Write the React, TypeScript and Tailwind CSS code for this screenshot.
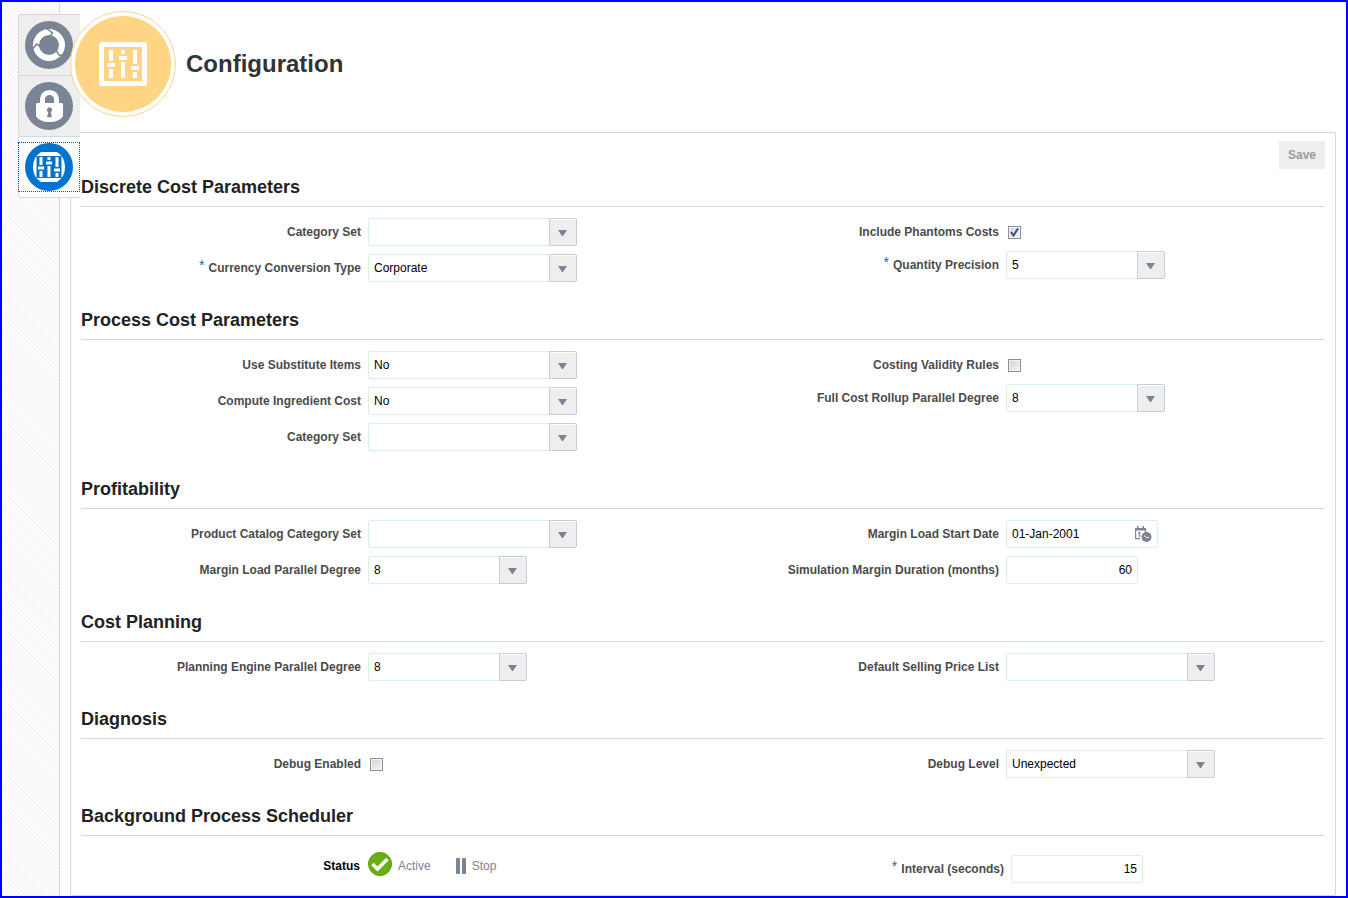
import React from 'react'

const widths = {
    small: 'w-[159px]',
    wide: 'w-[209px]',
}

const textBox =
    'h-7 rounded-[2px] border border-[#d6f5df] bg-white px-[5px] text-xs text-black outline-none'

function Field({ id, label, required, children }: {
    id: string
    label: string
    required?: boolean
    children: React.ReactNode
}) {
    return (
        <div className="flex items-start gap-[7px]">
            <label htmlFor={id} className="flex w-[280px] shrink-0 justify-end gap-1 pt-[5px] text-xs leading-[18px] font-bold text-[#4b4b4b]">
                {required && <span className="text-sm leading-3 font-normal text-[#0f6ab5]">*</span>}
                {label}
            </label>
            {children}
        </div>
    )
}

function SelectField({ id, label, value = '', size = 'wide', required }: {
    id: string
    label: string
    value?: string
    size?: 'small' | 'wide'
    required?: boolean
}) {
    return (
        <Field id={id} label={label} required={required}>
            <div className={`relative ${widths[size]}`}>
                <select id={id} defaultValue={value} className={`${textBox} block w-full appearance-none pr-8`}>
                    <option value={value}>{value}</option>
                </select>
                <span className="pointer-events-none absolute inset-y-0 right-0 flex w-7 items-center justify-center rounded-r-[2px] border border-[#c4ced7] bg-[#eeeeee] pt-[2px] pr-px shadow-[inset_0_1px_0_#ffffff]">
                    <svg width="9" height="6" viewBox="0 0 9 6" fill="#7b8494">
                        <path d="M0 0h9L5 6H4z" />
                    </svg>
                </span>
            </div>
        </Field>
    )
}

function CheckField({ id, label, checked }: { id: string; label: string; checked?: boolean }) {
    return (
        <div className="h-[25px]">
            <Field id={id} label={label}>
                <span className="relative mt-2 ml-[2px] block size-[13px]">
                    <input
                        id={id}
                        type="checkbox"
                        defaultChecked={checked}
                        className="peer block size-[13px] appearance-none border border-[#8e8f8f] bg-linear-to-br from-[#cfd3d8] to-[#f6f6f6] shadow-[inset_0_0_0_1px_#f4f4f4]"
                    />
                    <svg className="pointer-events-none absolute inset-0 hidden peer-checked:block" width="13" height="13" viewBox="0 0 13 13" fill="none" stroke="#3c4f8f" strokeWidth="2">
                        <path d="M3 6l2.5 3.5L10 2.5" />
                    </svg>
                </span>
            </Field>
        </div>
    )
}

function Section({ title, left, right }: { title: string; left: React.ReactNode; right: React.ReactNode }) {
    return (
        <section>
            <h2 className="border-b border-[#d6d7dd] pb-[5px] text-lg leading-7 font-bold text-[#222222]">{title}</h2>
            <div className="grid grid-cols-2 gap-x-8 pt-[11px]">
                <div className="flex flex-col gap-2">{left}</div>
                <div className="flex flex-col gap-2">{right}</div>
            </div>
        </section>
    )
}

function CycleIcon() {
    return (
        <svg width="48" height="48" viewBox="0 0 48 48">
            <circle cx="24" cy="24" r="24" fill="#7b8494" />
            <circle cx="24" cy="24" r="13" fill="none" stroke="#ffffff" strokeWidth="6" />
            <g fill="none" stroke="#7b8494" strokeWidth="1.5">
                <path d="M20.500 7l2.500 1.500 4.500 3.500-3.500 4.500" />
                <path d="M41 33l-6.500 1.500-4-5.500" />
                <path d="M7.500 28.500l4-5.500 5.500 3.500" />
            </g>
        </svg>
    )
}

function LockIcon() {
    return (
        <svg width="48" height="48" viewBox="0 0 48 48">
            <circle cx="24" cy="24" r="24" fill="#7b8494" />
            <path d="M17.500 22v-5a7 6.500 0 0 1 14 0v5" fill="none" stroke="#ffffff" strokeWidth="5" />
            <path d="M12 21h25l1 1v12c-2.500 4-7.500 6-13.500 6S13.500 38 11 34V22z" fill="#ffffff" />
            <path d="M24.500 25.300a2.600 2.600 0 0 1 1.200 4.900l1.300 5h-5l1.300-5a2.600 2.600 0 0 1 1.200-4.900z" fill="#7b8494" />
        </svg>
    )
}

function SlidersIcon() {
    return (
        <svg width="48" height="48" viewBox="0 0 48 48">
            <circle cx="24" cy="24" r="24" fill="#0572ce" />
            <path d="M16 9h16q8 5 8 15t-8 15H16q-8-5-8-15t8-15z" fill="#ffffff" />
            <path d="M11.500 13h25v22h-25z" fill="#0572ce" />
            <g fill="#ffffff">
                <path d="M14.500 14h3v8h-3zM14.500 28h3v6h-3zM13 23.500h6v3h-6z" />
                <path d="M22.500 14h3v3h-3zM22.500 23h3v11h-3zM21 18.500h6v3h-6z" />
                <path d="M30.500 14h3v10h-3zM30.500 30h3v4h-3zM29 25.500h6v3h-6z" />
            </g>
        </svg>
    )
}

function ConfigurationBadge() {
    return (
        <svg width="106" height="106" viewBox="0 0 106 106" className="shrink-0">
            <circle cx="53" cy="53" r="52.500" fill="#ffffff" stroke="#fbd58a" />
            <circle cx="53" cy="53" r="48" fill="#ffd583" />
            <rect x="31.500" y="33.500" width="43" height="39" rx="1" fill="none" stroke="#ffffff" strokeWidth="5" />
            <g fill="#ffffff">
                <path d="M39 39h4v11h-4zM39 58h4v9h-4zM37 52h8v4h-8z" />
                <path d="M51 39h4v4h-4zM51 51h4v16h-4zM49 45h8v4h-8z" />
                <path d="M63 39h4v14h-4zM63 61h4v6h-4zM61 55h8v4h-8z" />
            </g>
        </svg>
    )
}

const tabs = [
    { name: 'Processes', icon: <CycleIcon /> },
    { name: 'Security', icon: <LockIcon /> },
    { name: 'Configuration', icon: <SlidersIcon />, active: true },
]

export default function App() {
    return (
        <div className="flex min-h-screen border-2 border-[#0000ff] bg-white font-['Liberation_Sans',Arial,sans-serif]">
            <aside className="w-[58px] shrink-0 border-r border-[#d6d7dd] bg-[repeating-linear-gradient(45deg,#ffffff_0px,#ffffff_1px,#f1f1f1_2px,#ffffff_3px)] pt-3 pl-4">
                <nav className="relative w-[62px] rounded-l-[2px] border-b border-[#d6d7dd]">
                    {tabs.map((tab) => (
                        <div
                            key={tab.name}
                            className={`h-[61px] rounded-l-[2px] border-t border-l border-[#d6d7dd] pt-[6px] ${tab.active ? 'bg-white' : 'bg-[#eeeeee]'}`}
                        >
                            <a
                                href="#"
                                aria-label={tab.name}
                                className={`flex h-12 w-[60px] justify-center ${tab.active ? 'outline-1 outline-dotted outline-[#0a5ba5]' : ''}`}
                            >
                                {tab.icon}
                            </a>
                        </div>
                    ))}
                </nav>
            </aside>

            <main className="flex min-w-0 flex-1 flex-col px-[10px]">
                <header className="relative flex h-[130px] items-start gap-[10px] pt-[9px]">
                    <ConfigurationBadge />
                    <h1 className="text-2xl leading-[106px] font-bold text-[#333333]">Configuration</h1>
                </header>

                <div className="flex-1 rounded-[2px] border border-[#d6d7dd] px-[10px] pt-2">
                    <div className="mb-1 flex justify-end">
                        <button type="button" disabled className="h-7 bg-[#eeeeee] px-[9px] text-xs font-bold text-[#9b9b9b]">
                            Save
                        </button>
                    </div>

                    <form className="flex flex-col gap-6">
                        <Section
                            title="Discrete Cost Parameters"
                            left={
                                <>
                                    <SelectField id="discrete-category" label="Category Set" />
                                    <SelectField id="currency-type" label="Currency Conversion Type" value="Corporate" required />
                                </>
                            }
                            right={
                                <>
                                    <CheckField id="phantoms" label="Include Phantoms Costs" checked />
                                    <SelectField id="precision" label="Quantity Precision" value="5" size="small" required />
                                </>
                            }
                        />
                        <Section
                            title="Process Cost Parameters"
                            left={
                                <>
                                    <SelectField id="substitute" label="Use Substitute Items" value="No" />
                                    <SelectField id="ingredient" label="Compute Ingredient Cost" value="No" />
                                    <SelectField id="process-category" label="Category Set" />
                                </>
                            }
                            right={
                                <>
                                    <CheckField id="validity" label="Costing Validity Rules" />
                                    <SelectField id="rollup" label="Full Cost Rollup Parallel Degree" value="8" size="small" />
                                </>
                            }
                        />
                        <Section
                            title="Profitability"
                            left={
                                <>
                                    <SelectField id="catalog" label="Product Catalog Category Set" />
                                    <SelectField id="margin-degree" label="Margin Load Parallel Degree" value="8" size="small" />
                                </>
                            }
                            right={
                                <>
                                    <Field id="start-date" label="Margin Load Start Date">
                                        <div className="relative w-[152px]">
                                            <input id="start-date" type="text" defaultValue="01-Jan-2001" className={`${textBox} block w-full pr-7`} />
                                            <button type="button" aria-label="Select date" className="absolute top-[6px] right-[6px]">
                                                <svg width="17" height="17" viewBox="0 0 17 17" fill="#7b8494">
                                                    <path d="M0 2h11v4.500H9.800V4.500H1.200V12H5v1.200H0zM2 0h1.500v4H2zM7.500 0H9v4H7.500z" />
                                                    <path d="M4 6h1.300v5H4V7.500H3v-1z" />
                                                    <circle cx="11.500" cy="11" r="5" />
                                                    <path d="M9 9.500l2.500 2H14" fill="none" stroke="#ffffff" />
                                                </svg>
                                            </button>
                                        </div>
                                    </Field>
                                    <Field id="duration" label="Simulation Margin Duration (months)">
                                        <input id="duration" type="text" defaultValue="60" className={`${textBox} w-[132px] text-right`} />
                                    </Field>
                                </>
                            }
                        />
                        <Section
                            title="Cost Planning"
                            left={<SelectField id="planning" label="Planning Engine Parallel Degree" value="8" size="small" />}
                            right={<SelectField id="price-list" label="Default Selling Price List" />}
                        />
                        <Section
                            title="Diagnosis"
                            left={<CheckField id="debug" label="Debug Enabled" />}
                            right={<SelectField id="debug-level" label="Debug Level" value="Unexpected" />}
                        />
                        <Section
                            title="Background Process Scheduler"
                            left={
                                <div className="flex items-center pt-[5px] text-xs text-[#7b8494]">
                                    <span className="w-[279px] pt-[3px] text-right font-bold text-black">Status</span>
                                    <svg className="mr-[6px] ml-2" width="24" height="24" viewBox="0 0 24 24">
                                        <circle cx="12" cy="12" r="11.500" fill="#69ae14" stroke="#5a9a10" />
                                        <path d="M4.500 12l5 5L19.500 7" fill="none" stroke="#ffffff" strokeWidth="3.500" />
                                    </svg>
                                    <span className="pt-[3px]">Active</span>
                                    <button type="button" className="ml-[25px] flex items-center gap-[6px] pt-[3px]">
                                        <svg width="10" height="16" viewBox="0 0 10 16" fill="#7b8494">
                                            <rect width="4" height="16" rx="1" />
                                            <rect x="6" width="4" height="16" rx="1" />
                                        </svg>
                                        Stop
                                    </button>
                                </div>
                            }
                            right={
                                <div className="pt-2 pb-3 pl-[5px]">
                                    <Field id="interval" label="Interval (seconds)" required>
                                        <input id="interval" type="text" defaultValue="15" className={`${textBox} w-[132px] text-right`} />
                                    </Field>
                                </div>
                            }
                        />
                    </form>
                </div>
            </main>
        </div>
    )
}
